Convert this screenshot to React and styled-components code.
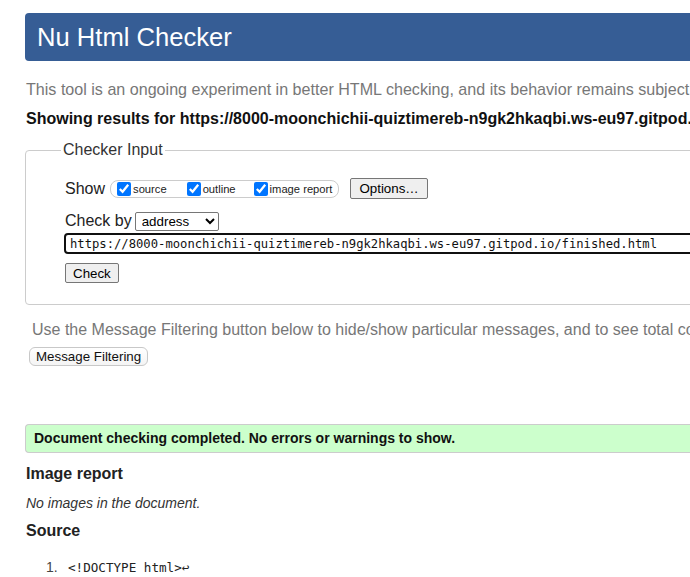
import React from "react";
import styled, { createGlobalStyle } from "styled-components";

const GlobalStyle = createGlobalStyle`
  html, body {
    margin: 0;
    padding: 0;
    overflow: hidden;
    background: #fff;
  }
  body {
    font-family: "Liberation Sans", Arial, sans-serif;
    color: #222;
  }
`;

const Page = styled.div`
  width: 1100px;
  padding: 13px 0 0 25px;
  box-sizing: border-box;
`;

const Header = styled.h1`
  margin: 0;
  height: 48px;
  display: flex;
  align-items: center;
  padding-left: 12px;
  background: #365d95;
  border-radius: 4px 0 0 4px;
  color: #fff;
  font-size: 25.6px;
  font-weight: normal;
`;

const Intro = styled.p`
  margin: 19px 0 0 1px;
  font-size: 16.1px;
  line-height: 18.4px;
  color: #777;
  white-space: nowrap;
`;

const Results = styled.p`
  margin: 12px 0 0 1px;
  font-size: 16px;
  line-height: 18.4px;
  font-weight: bold;
  color: #111;
  white-space: nowrap;
`;

const Fieldset = styled.fieldset`
  margin: 12px 0 0 0;
  padding: 19px 0 21px 39px;
  border: 1px solid #ccc;
  border-radius: 4px 0 0 4px;
  display: flex;
  flex-direction: column;
  align-items: flex-start;
`;

const Legend = styled.legend`
  padding: 0 2px;
  margin-left: -4px;
  font-size: 16px;
  line-height: 18.4px;
  color: #333;
`;

const Row = styled.div`
  display: flex;
  align-items: center;
  height: ${(p) => p.$h || 21}px;
  margin-top: ${(p) => p.$mt || 0}px;
`;

const RowLabel = styled.span`
  font-size: 16px;
  color: #222;
  margin-right: ${(p) => p.$gap || 4}px;
`;

const ShowBox = styled.span`
  display: inline-flex;
  align-items: center;
  height: 18px;
  box-sizing: border-box;
  border: 1px solid #ccc;
  border-radius: 8px;
  padding: 0 6px;
`;

const Opt = styled.label`
  display: inline-flex;
  align-items: center;
  font-size: 11.2px;
  color: #222;
  margin-left: ${(p) => p.$ml || 0}px;
`;

const Check = styled.input`
  width: 14px;
  height: 14px;
  margin: 0 2px 0 0;
  accent-color: #0075ff;
`;

const Btn = styled.button`
  font-family: "Liberation Sans", Arial, sans-serif;
  font-size: 13.33px;
  color: #000;
  background: #efefef;
  border: 1px solid #767676;
  border-radius: 2px;
  height: ${(p) => p.$h || 20}px;
  padding: 0 ${(p) => p.$px || 7}px;
  margin-left: ${(p) => p.$ml || 0}px;
`;

const Select = styled.select`
  font-family: "Liberation Sans", Arial, sans-serif;
  font-size: 13.33px;
  color: #000;
  width: 84px;
  height: 19px;
  border: 1px solid #767676;
  border-radius: 2px;
  background: #fff;
  padding: 0 0 0 2px;
`;

const UrlInput = styled.input`
  margin: 2px 0 0 -1px;
  width: 900px;
  height: 21px;
  box-sizing: border-box;
  border: 2px solid #101010;
  border-radius: 4px;
  padding: 0 4px;
  font-family: "DejaVu Sans Mono", "Liberation Mono", monospace;
  font-size: 12.2px;
  color: #111;
  outline: none;
`;

const Hint = styled.p`
  margin: 16px 0 0 7px;
  font-size: 16px;
  line-height: 18.4px;
  color: #777;
  white-space: nowrap;
`;

const FilterBtn = styled.button`
  display: block;
  margin: 7px 0 0 4px;
  height: 19px;
  padding: 0 6px;
  font-family: "Liberation Sans", Arial, sans-serif;
  font-size: 13.33px;
  color: #111;
  background: linear-gradient(#fff, #f4f4f4);
  border: 1px solid #c8c8c8;
  border-radius: 6px;
`;

const Success = styled.div`
  margin-top: 58px;
  height: 29px;
  box-sizing: border-box;
  display: flex;
  align-items: center;
  padding-left: 8px;
  background: #ccffcc;
  border: 1px solid #ccc;
  border-right: none;
  border-radius: 4px 0 0 4px;
  font-size: 14px;
  font-weight: bold;
  color: #111;
`;

const SectionTitle = styled.h2`
  margin: ${(p) => p.$mt}px 0 0 1px;
  font-size: 16px;
  line-height: 18.4px;
  font-weight: bold;
  color: #222;
`;

const Note = styled.p`
  margin: 12px 0 0 1px;
  font-size: 14px;
  line-height: 16px;
  font-style: italic;
  color: #333;
`;

const SourceList = styled.ol`
  list-style: none;
  margin: 19px 0 0 0;
  padding: 0;
`;

const Line = styled.li`
  display: flex;
  align-items: baseline;
`;

const LineNum = styled.span`
  display: inline-block;
  box-sizing: border-box;
  width: 43px;
  padding-left: 21px;
  font-size: 14px;
  color: #444;
`;

const Code = styled.code`
  font-family: "DejaVu Sans Mono", "Liberation Mono", monospace;
  font-size: 12.6px;
  color: #222;
`;

export default function App() {
  return (
    <>
      <GlobalStyle />
      <Page>
        <Header>Nu Html Checker</Header>
        <Intro>
          This tool is an ongoing experiment in better HTML checking, and its
          behavior remains subject to change
        </Intro>
        <Results>
          Showing results for
          https://8000-moonchichii-quiztimereb-n9gk2hkaqbi.ws-eu97.gitpod.io/finished.html
        </Results>
        <Fieldset>
          <Legend>Checker Input</Legend>
          <Row $h={21}>
            <RowLabel $gap={5}>Show</RowLabel>
            <ShowBox>
              <Opt>
                <Check type="checkbox" defaultChecked />
                source
              </Opt>
              <Opt $ml={20}>
                <Check type="checkbox" defaultChecked />
                outline
              </Opt>
              <Opt $ml={18}>
                <Check type="checkbox" defaultChecked />
                image report
              </Opt>
            </ShowBox>
            <Btn $ml={11} $h={21} $px={8}>
              Options…
            </Btn>
          </Row>
          <Row $h={20} $mt={12}>
            <RowLabel $gap={3}>Check by</RowLabel>
            <Select defaultValue="address">
              <option value="address">address</option>
              <option value="file">file upload</option>
              <option value="text">text input</option>
            </Select>
          </Row>
          <UrlInput
            type="url"
            defaultValue="https://8000-moonchichii-quiztimereb-n9gk2hkaqbi.ws-eu97.gitpod.io/finished.html"
          />
          <Row $h={20} $mt={9}>
            <Btn $px={7}>Check</Btn>
          </Row>
        </Fieldset>
        <Hint>
          Use the Message Filtering button below to hide/show particular
          messages, and to see total counts of errors and warnings.
        </Hint>
        <FilterBtn>Message Filtering</FilterBtn>
        <Success>Document checking completed. No errors or warnings to show.</Success>
        <SectionTitle $mt={12}>Image report</SectionTitle>
        <Note>No images in the document.</Note>
        <SectionTitle $mt={11}>Source</SectionTitle>
        <SourceList>
          <Line>
            <LineNum>1.</LineNum>
            <Code>&lt;!DOCTYPE html&gt;↩</Code>
          </Line>
        </SourceList>
      </Page>
    </>
  );
}
